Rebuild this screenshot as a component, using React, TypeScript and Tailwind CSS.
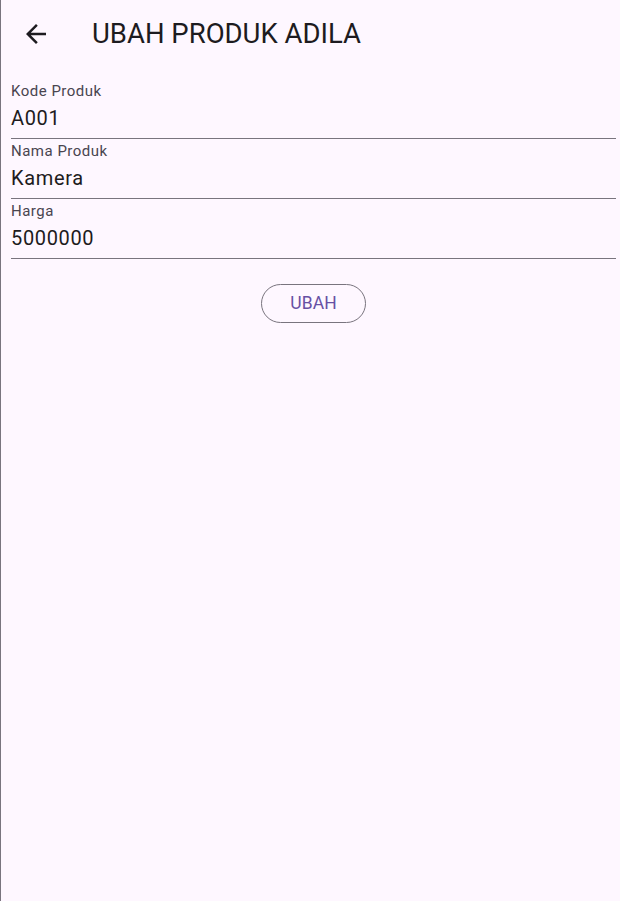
import React from 'react';

interface Field {
  label: string;
  value: string;
}

const fields: Field[] = [
  { label: 'Kode Produk', value: 'A001' },
  { label: 'Nama Produk', value: 'Kamera' },
  { label: 'Harga', value: '5000000' },
];

const ArrowBack: React.FC = () => (
  <svg width="30" height="30" viewBox="0 0 24 24" fill="#1d1b20" aria-hidden="true">
    <path d="M20 11H7.83l5.59-5.59L12 4l-8 8 8 8 1.41-1.41L7.83 13H20v-2z" />
  </svg>
);

const App: React.FC = () => {
  return (
    <div
      className="h-[901px] w-[620px] bg-[#fef7ff] border-l border-[#79747e] overflow-hidden"
      style={{ fontFamily: 'Roboto, "Liberation Sans", sans-serif' }}
    >
      {/* app bar */}
      <div className="flex items-start pt-[16px] pl-[20px] h-[66px]">
        <div className="mt-[3px] w-[30px] h-[30px] flex items-center justify-center">
          <ArrowBack />
        </div>
        <h1 className="ml-[41px] text-[27.5px] leading-[36px] text-[#1d1b20] font-normal">
          UBAH PRODUK ADILA
        </h1>
      </div>

      {/* form */}
      <div className="pt-[15px] pl-[10px] pr-[4px] flex flex-col gap-[2px]">
        {fields.map((field) => (
          <div key={field.label} className="border-b border-[#79747e] pb-[6px]">
            <div className="text-[15px] leading-[20px] tracking-[0.5px] text-[#49454f]">{field.label}</div>
            <div className="mt-[3px] text-[20px] leading-[28px] tracking-[0.65px] text-[#1d1b20]">{field.value}</div>
          </div>
        ))}

        <div className="flex justify-center mt-[23px]">
          <button className="h-[39px] px-[28px] rounded-full border border-[#79747e] text-[17.5px] tracking-[0.1px] text-[#6750a4]">
            UBAH
          </button>
        </div>
      </div>
    </div>
  );
};

export default App;
